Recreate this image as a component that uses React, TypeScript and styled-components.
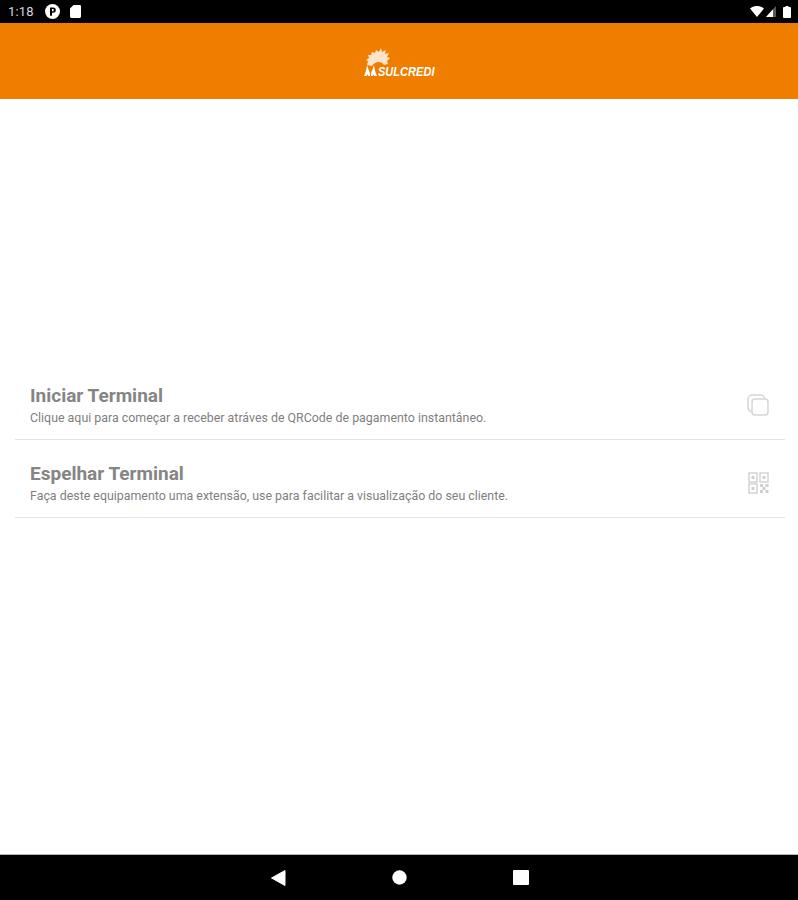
import React from 'react';
import styled, { createGlobalStyle } from 'styled-components';

const GlobalStyle = createGlobalStyle`
  html, body {
    margin: 0;
    padding: 0;
    background: #fff;
  }
  body {
    font-family: Roboto, "Liberation Sans", sans-serif;
  }
`;

const Screen = styled.div`
  width: 798px;
  height: 900px;
  display: flex;
  flex-direction: column;
  overflow: hidden;
`;

const StatusBar = styled.div`
  height: 23px;
  flex: none;
  background: #000;
  display: flex;
  align-items: center;
  justify-content: space-between;
  padding: 0 7px 0 8px;
  box-sizing: border-box;
`;

const StatusGroup = styled.div<{ $gap: number }>`
  display: flex;
  align-items: center;
  gap: ${props => props.$gap}px;
`;

const Clock = styled.span`
  color: #d8d8d8;
  font-size: 13px;
  letter-spacing: 0.2px;
  margin-right: 1px;
`;

const BatterySlot = styled.span`
  display: flex;
  margin-left: 5px;
`;

const Header = styled.header`
  height: 76px;
  flex: none;
  background: #ef7d00;
  display: flex;
  align-items: center;
  justify-content: center;
`;

const Logo = styled.div`
  position: relative;
  width: 72px;
  height: 30px;
  margin-top: 4px;
`;

const LogoText = styled.span`
  position: absolute;
  left: 15px;
  bottom: 0;
  color: #fff;
  font-family: "Liberation Sans", sans-serif;
  font-size: 13px;
  font-weight: 700;
  font-style: italic;
  line-height: 13px;
  transform: scaleX(0.85);
  transform-origin: left center;
`;

const Content = styled.main`
  flex: 1;
  background: #fff;
  padding: 263px 13px 0 15px;
`;

const Row = styled.div`
  height: 78px;
  box-sizing: border-box;
  border-bottom: 1px solid #e4e4e4;
  display: flex;
  align-items: center;
  justify-content: space-between;
  padding: 8px 16px 0 15px;
`;

const RowText = styled.div`
  display: flex;
  flex-direction: column;
`;

const RowTitle = styled.div`
  color: #858585;
  font-size: 19px;
  font-weight: 700;
  line-height: 22px;
`;

const RowSubtitle = styled.div`
  color: #7f7f7f;
  font-size: 12.4px;
  line-height: 15px;
  margin-top: 3px;
`;

const NavBar = styled.nav`
  height: 46px;
  flex: none;
  background: #000;
  border-top: 1px solid #b5b5b5;
  box-sizing: border-box;
  display: flex;
  align-items: center;
  justify-content: center;
  gap: 106px;
  padding-left: 1px;
`;

const PlayStoreBadge = () => (
  <svg width="15" height="15" viewBox="0 0 15 15">
    <circle cx="7.5" cy="7.5" r="7.5" fill="#fff" />
    <path d="M5 3.5h3.2a2.6 2.6 0 0 1 0 5.2H7v3H5z" fill="#000" />
    <rect x="7" y="5" width="1.6" height="2.3" fill="#fff" />
  </svg>
);

const SdCard = () => (
  <svg width="11" height="13" viewBox="0 0 11 13">
    <path d="M3.5 0H9.6A1.4 1.4 0 0 1 11 1.4V11.6A1.4 1.4 0 0 1 9.6 13H1.4A1.4 1.4 0 0 1 0 11.6V3.5z" fill="#fff" />
  </svg>
);

const Wifi = () => (
  <svg width="14" height="11" viewBox="0 0 14 11">
    <path d="M0 2.6C4-.9 10-.9 14 2.6L7 11z" fill="#fff" />
  </svg>
);

const Signal = () => (
  <svg width="10" height="11" viewBox="0 0 10 11">
    <path d="M10 0V11H0z" fill="#fff" opacity="0.35" />
    <path d="M7 3.2V11H0z" fill="#fff" />
  </svg>
);

const Battery = () => (
  <svg width="8" height="12" viewBox="0 0 8 12">
    <path d="M2.5 0h3v1H7a1 1 0 0 1 1 1v9a1 1 0 0 1-1 1H1a1 1 0 0 1-1-1V2a1 1 0 0 1 1-1h1.500z" fill="#fff" />
  </svg>
);

// sun rays and the two trees of the logo
const LogoMark = () => (
  <svg width="30" height="30" viewBox="0 0 30 30" style={{ position: 'absolute', left: 1, top: 0 }}>
    <path
      d="M3 17 4 13 2 12 5 10 4 7 7 7 8 4 11 5 12 2 15 4 17 0 18 4 22 2 21 6 25 5 23 9 26 10 23 13 24 16 20 17 C18 13 11 13 8 18 Z"
      fill="#fde3cb"
    />
    <path
      d="M3 17 C4 20 5 23 6 25 V28 H4.500 L3.500 26.500 L2.500 28 H0 C1.500 25 2.500 21 3 17Z M10 17 C10.500 21 11.500 25 13 28 H10.500 L9.500 26.500 L8.500 28 H7 V25 C8 23 9 20 10 17Z"
      fill="#fff"
    />
  </svg>
);

const CopyIcon = () => (
  <svg width="22" height="22" viewBox="0 0 22 22" fill="none" stroke="#d6d6d6" strokeWidth="1.5">
    <path d="M4.500 18 C2.500 17 1 15.500 1 13.500 V5 C1 2.800 2.800 1 5 1 H13.500 C15.500 1 17 2.500 18 4.500" />
    <rect x="5" y="5" width="16" height="16" rx="3" />
  </svg>
);

const QrIcon = () => (
  <svg width="21" height="22" viewBox="0 0 21 22" fill="none" stroke="#d0d0d0" strokeWidth="1.400">
    <rect x="1" y="1" width="8" height="9" />
    <rect x="12" y="1" width="8" height="9" />
    <rect x="1" y="12" width="8" height="9" />
    <g fill="#d0d0d0" stroke="none">
      <rect x="3.500" y="4" width="3" height="3" />
      <rect x="14.500" y="4" width="3" height="3" />
      <rect x="3.500" y="15" width="3" height="3" />
      <rect x="12" y="12" width="3" height="3" />
      <rect x="17.500" y="12" width="3" height="3" />
      <rect x="14.500" y="15" width="3" height="3" />
      <rect x="12" y="18" width="3" height="3" />
      <rect x="17.500" y="18" width="3" height="3" />
    </g>
  </svg>
);

const BackIcon = () => (
  <svg width="15" height="16" viewBox="0 0 15 16">
    <path d="M14 0.500V15.500L0.500 8z" fill="#fff" stroke="#fff" strokeLinejoin="round" />
  </svg>
);

const HomeIcon = () => (
  <svg width="15" height="15" viewBox="0 0 15 15">
    <circle cx="7.500" cy="7.500" r="7.200" fill="#fff" />
  </svg>
);

const RecentsIcon = () => (
  <svg width="16" height="15" viewBox="0 0 16 15">
    <rect width="16" height="15" rx="1" fill="#fff" />
  </svg>
);

const rows = [
  {
    title: 'Iniciar Terminal',
    subtitle: 'Clique aqui para começar a receber atráves de QRCode de pagamento instantâneo.',
    icon: <CopyIcon />,
  },
  {
    title: 'Espelhar Terminal',
    subtitle: 'Faça deste equipamento uma extensão, use para facilitar a visualização do seu cliente.',
    icon: <QrIcon />,
  },
];

export default function App() {
  return (
    <Screen>
      <GlobalStyle />
      <StatusBar>
        <StatusGroup $gap={10}>
          <Clock>1:18</Clock>
          <PlayStoreBadge />
          <SdCard />
        </StatusGroup>
        <StatusGroup $gap={2}>
          <Wifi />
          <Signal />
          <BatterySlot>
            <Battery />
          </BatterySlot>
        </StatusGroup>
      </StatusBar>
      <Header>
        <Logo>
          <LogoMark />
          <LogoText>SULCREDI</LogoText>
        </Logo>
      </Header>
      <Content>
        {rows.map(row => (
          <Row key={row.title}>
            <RowText>
              <RowTitle>{row.title}</RowTitle>
              <RowSubtitle>{row.subtitle}</RowSubtitle>
            </RowText>
            {row.icon}
          </Row>
        ))}
      </Content>
      <NavBar>
        <BackIcon />
        <HomeIcon />
        <RecentsIcon />
      </NavBar>
    </Screen>
  );
}
